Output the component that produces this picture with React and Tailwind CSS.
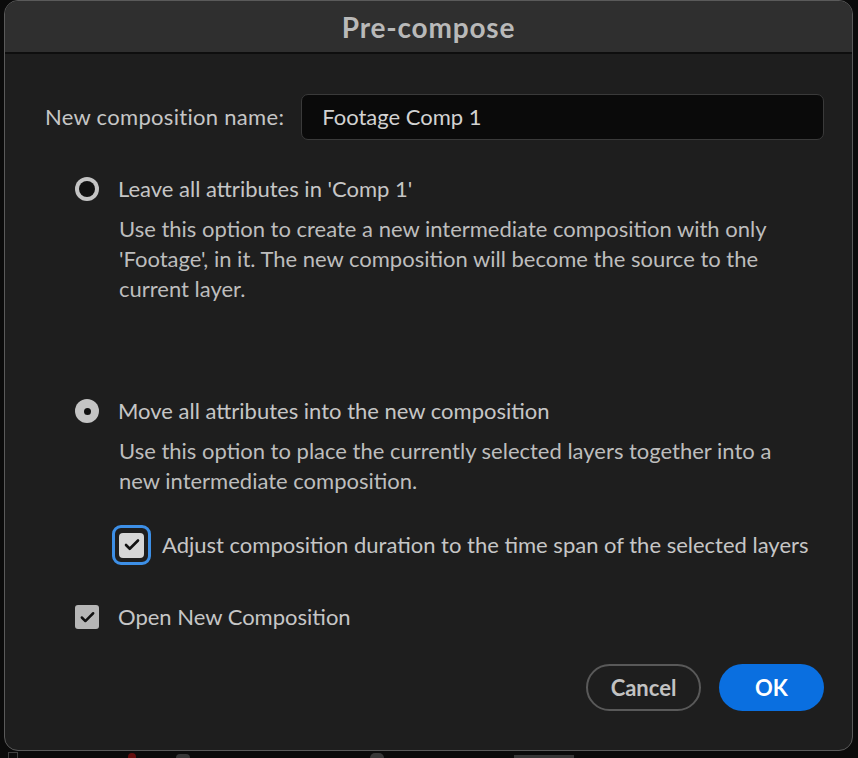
import { Check } from 'lucide-react';

const font = { fontFamily: 'Lato, "Open Sans", sans-serif' };

function Radio({ checked }) {
  return (
    <div className="w-6 h-6 rounded-full bg-[#c4c4c4] flex items-center justify-center shrink-0">
      {checked ? (
        <div className="w-[7px] h-[7px] rounded-full bg-[#111]" />
      ) : (
        <div className="w-[16px] h-[16px] rounded-full bg-[#111]" />
      )}
    </div>
  );
}

export default function App() {
  return (
    <div className="w-[858px] h-[758px] bg-[#0b0b0b] overflow-hidden" style={font}>
      <div className="ml-[4px] w-[849px] h-[751px] rounded-[14px] border border-[#5a5a5a] overflow-hidden flex flex-col bg-[#1e1e1e]">
        <div className="h-[53px] shrink-0 bg-[#2f2f2f] border-b-2 border-[#0e0e0e] flex items-center justify-center">
          <span className="text-[28px] font-bold text-[#b9b9b9] tracking-[0.8px] leading-none">Pre-compose</span>
        </div>

        <div className="flex-1 flex flex-col pl-[40px] pr-[28px] pt-[40px] text-[22px] leading-[30px] text-[#c6c6c6]">
          <div className="flex items-center gap-[17px]">
            <span className="tracking-[0.3px]">New composition name:</span>
            <div className="flex-1 h-[46px] rounded-[7px] bg-[#0a0a0a] border border-[#3a3a3a] flex items-center px-[20px] text-[#d2d2d2]">
              Footage Comp 1
            </div>
          </div>

          <div className="pl-[30px]">
            <div className="mt-[34px] flex items-center gap-[19px]">
              <Radio />
              <span>Leave all attributes in 'Comp 1'</span>
            </div>
            <p className="mt-[10px] pl-[44px] pr-[40px] text-[#bdbdbd]">
              Use this option to create a new intermediate composition with only 'Footage', in it. The new composition will become the source to the current layer.
            </p>

            <div className="mt-[92px] flex items-center gap-[19px]">
              <Radio checked />
              <span>Move all attributes into the new composition</span>
            </div>
            <p className="mt-[10px] pl-[44px] pr-[40px] text-[#bdbdbd]">
              Use this option to place the currently selected layers together into a new intermediate composition.
            </p>

            <div className="mt-[29px] ml-[37px] flex items-center gap-[11px]">
              <div className="w-[39px] h-[40px] rounded-[9px] border-[3px] border-[#3d8fe6] flex items-center justify-center">
                <div className="w-[25px] h-[25px] rounded-[4px] bg-[#d6d6d6] flex items-center justify-center">
                  <Check size={18} strokeWidth={3.5} className="text-[#111]" />
                </div>
              </div>
              <span className="whitespace-nowrap">Adjust composition duration to the time span of the selected layers</span>
            </div>

            <div className="mt-[37px] flex items-center gap-[19px]">
              <div className="w-6 h-6 rounded-[3px] bg-[#b6b6b6] flex items-center justify-center">
                <Check size={17} strokeWidth={3.5} className="text-[#111]" />
              </div>
              <span>Open New Composition</span>
            </div>
          </div>

          <div className="mt-[32px] flex justify-end gap-[18px]">
            <button className="w-[115px] h-[47px] rounded-full border-2 border-[#595959] text-[22px] font-bold text-[#c2c2c2]">
              Cancel
            </button>
            <button className="w-[105px] h-[47px] rounded-full bg-[#0a6fe0] text-[22px] font-bold text-white">
              OK
            </button>
          </div>
        </div>
      </div>
      <div className="h-[7px] flex items-end gap-[40px] pl-[8px] opacity-60">
        <div className="w-[10px] h-[6px] border-t border-l border-r border-[#666]" />
        <div className="w-[8px] h-[5px] bg-[#a01010] rounded-t-full ml-[70px]" />
        <div className="w-[14px] h-[4px] bg-[#555] rounded-t-full" />
        <div className="w-[14px] h-[5px] bg-[#555] rounded-t-md ml-[140px]" />
        <div className="w-[60px] h-[3px] bg-[#555] ml-[90px]" />
      </div>
    </div>
  );
}
